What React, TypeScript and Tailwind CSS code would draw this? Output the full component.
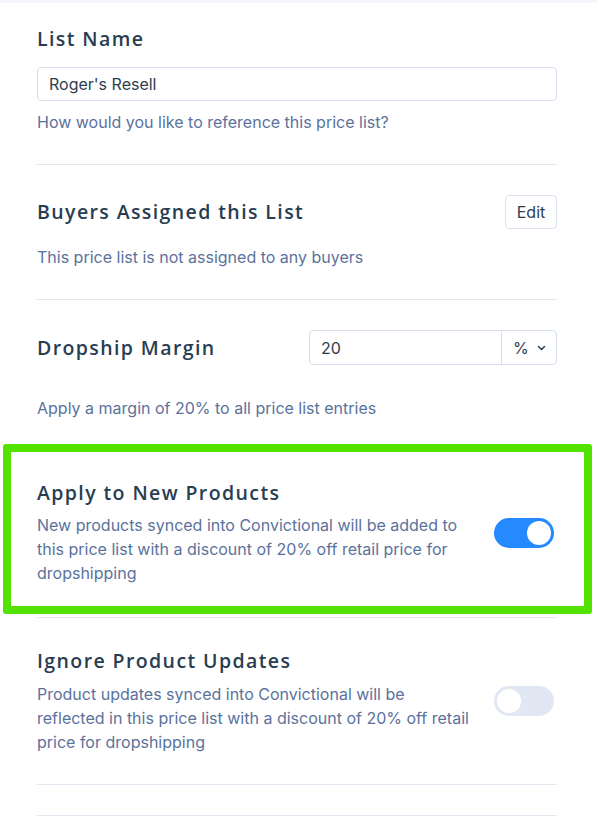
import React from "react";

const H = "font-['Open_Sans',sans-serif] font-semibold text-[19.5px] leading-[24px] text-[#283d52] tracking-[1.4px]";
const P = "font-['Inter',sans-serif] text-[16px] leading-[24px] text-[#5a729c]";

function Toggle({ on }: { on: boolean }) {
  return (
    <div
      className={
        "flex h-[30px] w-[60px] shrink-0 items-center rounded-full px-[3px] " +
        (on ? "justify-end bg-[#2589ff]" : "justify-start bg-[#e1e8f4]")
      }
    >
      <div className="h-[24px] w-[24px] rounded-full bg-white" />
    </div>
  );
}

export default function App() {
  return (
    <div className="min-h-[819px] w-[597px] bg-white">
      <div className="h-[3px] bg-[#f2f5f9]" />
      <div className="pl-[37px] pr-[40px]">
        {/* List Name */}
        <div className={H + " mt-[24px]"}>List Name</div>
        <div className="mt-[16px] flex h-[34px] items-center rounded-[4px] border border-[#d5deeb] px-[11px] font-['Inter',sans-serif] text-[16px] text-[#2c3e50]">
          Roger's Resell
        </div>
        <div className={P + " mt-[9px]"}>How would you like to reference this price list?</div>
        <div className="mt-[30px] h-px bg-[#e3e9f2]" />

        {/* Buyers */}
        <div className="mt-[30px] flex h-[34px] items-center justify-between">
          <div className={H}>Buyers Assigned this List</div>
          <div className="flex h-[34px] w-[52px] items-center justify-center rounded-[4px] border border-[#dbe3ee] font-['Inter',sans-serif] text-[16px] text-[#2c3e50]">
            Edit
          </div>
        </div>
        <div className={P + " mt-[16px]"}>This price list is not assigned to any buyers</div>
        <div className="mt-[30px] h-px bg-[#e3e9f2]" />

        {/* Dropship Margin */}
        <div className="mt-[30px] flex h-[35px] items-center justify-between">
          <div className={H}>Dropship Margin</div>
          <div className="flex h-[35px] w-[248px] rounded-[4px] border border-[#d5deeb] font-['Inter',sans-serif] text-[16px] text-[#2c3e50]">
            <div className="flex flex-1 items-center px-[11px]">20</div>
            <div className="flex w-[55px] items-center gap-[8px] border-l border-[#d5deeb] pl-[11px]">
              <span>%</span>
              <svg width="9" height="6" viewBox="0 0 9 6" fill="none">
                <path d="M1.5 1.5L4.5 4.5L7.5 1.5" stroke="#2c3e50" strokeWidth="1.5" strokeLinecap="round" strokeLinejoin="round" />
              </svg>
            </div>
          </div>
        </div>
        <div className={P + " mt-[31px]"}>Apply a margin of 20% to all price list entries</div>

        {/* Highlighted: Apply to New Products */}
        <div className="mt-[24px] -ml-[34px] -mr-[35px] rounded-[3px] border-[8px] border-[#52e400] pb-[21px] pl-[26px] pr-[30px] pt-[29px]">
          <div className={H}>Apply to New Products</div>
          <div className="mt-[8px] flex items-start justify-between">
            <div className={P + " whitespace-nowrap"}>
              New products synced into Convictional will be added to
              <br />
              this price list with a discount of 20% off retail price for
              <br />
              dropshipping
            </div>
            <div className="mt-[5px]">
              <Toggle on />
            </div>
          </div>
        </div>
        <div className="mt-[3px] h-px bg-[#e3e9f2]" />

        {/* Ignore Product Updates */}
        <div className={H + " mt-[31px]"}>Ignore Product Updates</div>
        <div className="mt-[9px] flex items-start justify-between pr-[3px]">
          <div className={P + " whitespace-nowrap"}>
            Product updates synced into Convictional will be
            <br />
            reflected in this price list with a discount of 20% off retail
            <br />
            price for dropshipping
          </div>
          <div className="mt-[4px]">
            <Toggle on={false} />
          </div>
        </div>
        <div className="mt-[30px] h-px bg-[#e3e9f2]" />
        <div className="mt-[30px] h-px bg-[#e3e9f2]" />
      </div>
    </div>
  );
}
